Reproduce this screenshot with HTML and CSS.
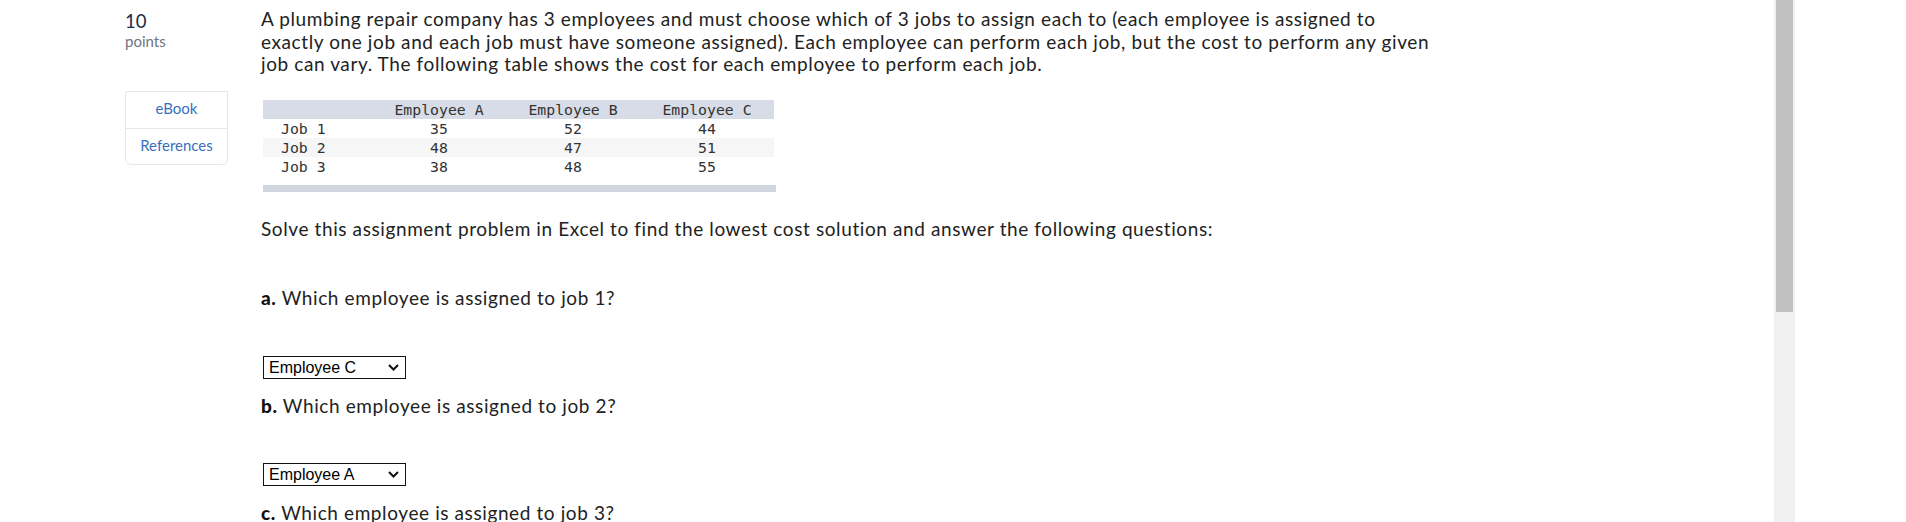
FILE: index.html
```html
<!DOCTYPE html>
<html lang="en">
<head>
<meta charset="utf-8">
<title>Assignment problem</title>
<link rel="stylesheet" href="styles.css">
</head>
<body>
<div class="frame">
  <div class="content">
    <div class="side">
      <div class="pts-num">10</div>
      <div class="pts-label">points</div>
      <div class="tools">
        <div class="tool">eBook</div>
        <div class="tool">References</div>
      </div>
    </div>
    <div class="main">
      <p class="intro">A plumbing repair company has 3 employees and must choose which of 3 jobs to assign each to (each employee is assigned to exactly one job and each job must have someone assigned). Each employee can perform each job, but the cost to perform any given job can vary. The following table shows the cost for each employee to perform each job.</p>
      <div class="table">
        <div class="row head">
          <div class="cell first"></div>
          <div class="cell">Employee A</div>
          <div class="cell">Employee B</div>
          <div class="cell">Employee C</div>
        </div>
        <div class="row">
          <div class="cell first">Job 1</div>
          <div class="cell">35</div>
          <div class="cell">52</div>
          <div class="cell">44</div>
        </div>
        <div class="row alt">
          <div class="cell first">Job 2</div>
          <div class="cell">48</div>
          <div class="cell">47</div>
          <div class="cell">51</div>
        </div>
        <div class="row">
          <div class="cell first">Job 3</div>
          <div class="cell">38</div>
          <div class="cell">48</div>
          <div class="cell">55</div>
        </div>
        <div class="bar"></div>
      </div>
      <p class="lead">Solve this assignment problem in Excel to find the lowest cost solution and answer the following questions:</p>
      <p class="q q-first"><b>a.</b> Which employee is assigned to job 1?</p>
      <div class="select sel-first"><span class="sel-text">Employee C</span><svg class="chev" width="11" height="7" viewBox="0 0 11 7"><polyline points="1,1 5.5,5.5 10,1" fill="none" stroke="#111" stroke-width="2"/></svg></div>
      <p class="q"><b>b.</b> Which employee is assigned to job 2?</p>
      <div class="select"><span class="sel-text">Employee A</span><svg class="chev" width="11" height="7" viewBox="0 0 11 7"><polyline points="1,1 5.5,5.5 10,1" fill="none" stroke="#111" stroke-width="2"/></svg></div>
      <p class="q"><b>c.</b> Which employee is assigned to job 3?</p>
    </div>
  </div>
  <div class="track"><div class="thumb"></div></div>
  <div class="gutter"></div>
</div>
</body>
</html>
```
FILE: styles.css
```css
html, body {
  margin: 0;
  height: 100%;
  overflow: hidden;
  background: #fff;
}
.frame {
  display: flex;
  height: 522px;
}
.content {
  flex: 1;
  display: flex;
  overflow: hidden;
  padding-left: 125px;
  font-family: Lato, "Open Sans", sans-serif;
  color: #222;
}
.side {
  flex: none;
  width: 103px;
  padding-top: 10px;
}
.pts-num {
  font-size: 18.5px;
  line-height: 22px;
  color: #1c2c44;
}
.pts-label {
  font-size: 15px;
  line-height: 18px;
  color: #6f7680;
}
.tools {
  margin-top: 41px;
  border: 1px solid #e6e6e6;
  border-radius: 0 0 6px 6px;
}
.tool {
  box-sizing: border-box;
  height: 36px;
  padding-bottom: 4px;
  display: flex;
  align-items: center;
  justify-content: center;
  font-size: 15px;
  color: #3b6fbd;
}
.tool + .tool {
  border-top: 1px solid #e6e6e6;
}
.main {
  flex: none;
  width: 1170px;
  margin-left: 33px;
}
.intro, .lead, .q {
  margin: 0;
  font-size: 19px;
  letter-spacing: 0.6px;
  line-height: 22.5px;
}
.intro {
  margin-top: 8px;
}
.table {
  margin: 24.5px 0 0 2px;
  width: 513px;
  font-family: "DejaVu Sans Mono", "Liberation Mono", monospace;
  font-size: 14.8px;
  letter-spacing: 0;
  color: #333;
}
.row {
  display: grid;
  grid-template-columns: 109px 134px 134px 134px;
  width: 511px;
  height: 19px;
  line-height: 19px;
}
.row.head {
  background: #d8dce6;
}
.row.alt {
  background: #f6f6f6;
}
.cell {
  text-align: center;
  white-space: pre;
}
.cell.first {
  text-align: left;
  padding-left: 18px;
}
.bar {
  margin-top: 9px;
  height: 7px;
  background: #d1d5df;
}
.lead {
  margin-top: 26px;
}
.q {
  margin-top: 16.5px;
}
.q.q-first {
  margin-top: 46.8px;
}
.q b {
  font-weight: 900;
  color: #111;
}
.select {
  margin: 45px 0 0 2px;
  box-sizing: border-box;
  width: 143px;
  height: 23px;
  border: 1px solid #111;
  display: flex;
  align-items: center;
  justify-content: space-between;
  padding: 0 6px 0 5px;
  font-family: "Liberation Sans", Arial, sans-serif;
  font-size: 16px;
  line-height: 21px;
  letter-spacing: 0;
  color: #000;
}
.select.sel-first {
  margin-top: 46px;
}
.track {
  flex: none;
  width: 21px;
  background: #f0f0f0;
}
.thumb {
  margin: 0 2px;
  height: 312px;
  background: #c1c1c1;
}
.gutter {
  flex: none;
  width: 111px;
  background: #fff;
}
```
